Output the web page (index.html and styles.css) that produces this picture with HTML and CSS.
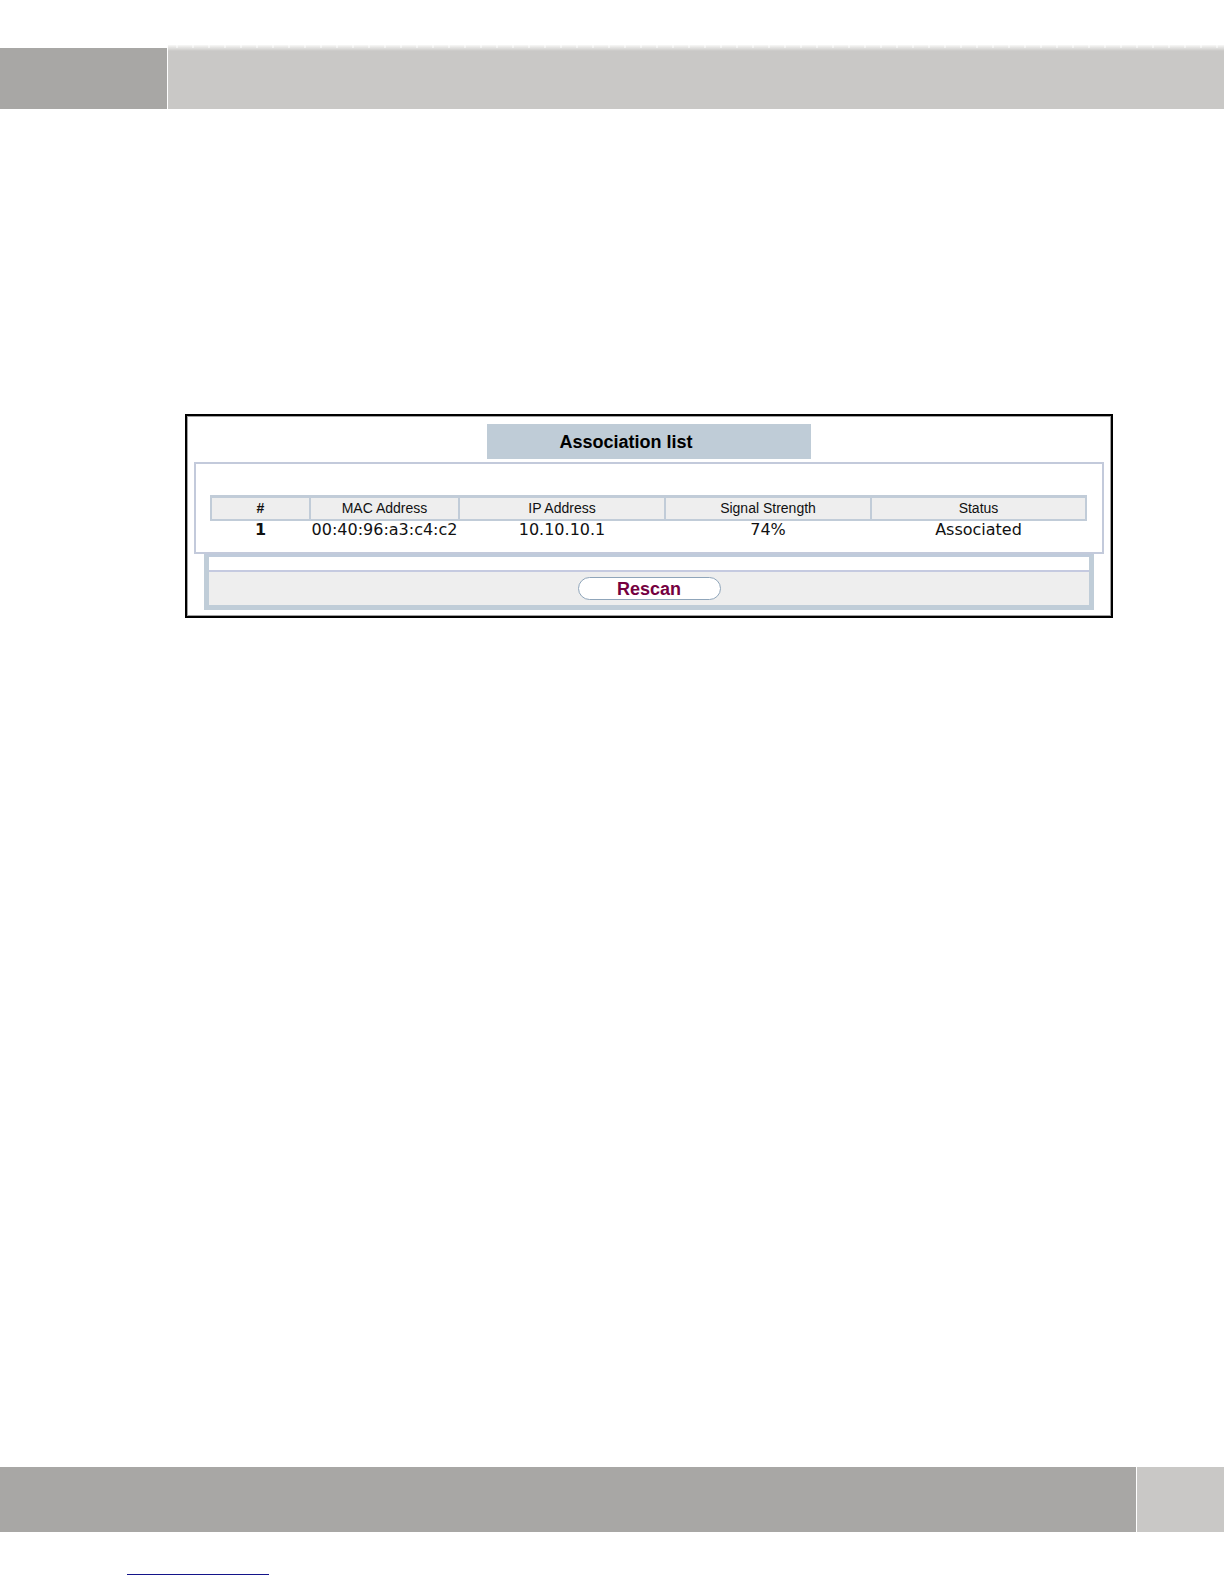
FILE: index.html
```html
<!DOCTYPE html>
<html lang="en">
<head>
<meta charset="utf-8">
<meta name="viewport" content="width=device-width, initial-scale=1">
<title>Association list</title>
<link rel="stylesheet" href="styles.css">
</head>
<body>
<header class="top-bar">
  <div class="top-dark"></div>
  <div class="top-light"></div>
</header>
<main class="content">
  <section class="frame">
    <h1 class="title">Association list</h1>
    <div class="panel">
      <table class="stations">
        <colgroup>
          <col class="col-num"><col class="col-mac"><col class="col-ip"><col class="col-signal"><col>
        </colgroup>
        <thead>
          <tr>
            <th class="num" scope="col">#</th>
            <th scope="col">MAC Address</th>
            <th scope="col">IP Address</th>
            <th scope="col">Signal Strength</th>
            <th scope="col">Status</th>
          </tr>
        </thead>
        <tbody>
          <tr>
            <td class="num">1</td>
            <td>00:40:96:a3:c4:c2</td>
            <td>10.10.10.1</td>
            <td>74%</td>
            <td>Associated</td>
          </tr>
        </tbody>
      </table>
    </div>
    <div class="actions">
      <div class="action-row">
        <button class="rescan" type="button">Rescan</button>
      </div>
    </div>
  </section>
</main>
<footer class="footer">
  <div class="bottom-bar">
    <div class="bottom-dark"></div>
    <div class="bottom-light"></div>
  </div>
  <div class="rule"></div>
</footer>
</body>
</html>
```
FILE: styles.css
```css
* {
  box-sizing: border-box;
}

body {
  margin: 0;
  min-height: 100vh;
  display: flex;
  flex-direction: column;
  background: #fff;
  color: #111;
  font-family: "Liberation Sans", Arial, sans-serif;
}

.top-bar {
  display: flex;
  align-items: flex-end;
  gap: 1px;
  padding-top: 45px;
}

.top-dark {
  width: 167px;
  height: 61px;
  background: #a8a7a5;
}

.top-light {
  flex: 1;
  height: 64px;
  background:
    repeating-linear-gradient(90deg, transparent 0 8px, rgba(255, 255, 255, 0.5) 8px 10px, transparent 10px 16px) 0 0 / 100% 3px no-repeat,
    linear-gradient(#f8f8f7, #c9c8c6 6px);
}

.content {
  flex: 1;
  padding: 305px 111px 40px 185px;
}

.frame {
  padding: 8px 7px 6px;
  border: 2px solid #000;
  box-shadow: inset 0 0 0 1px #a0a0a0;
}

.title {
  width: 324px;
  height: 35px;
  margin: 0 auto 3px;
  padding-right: 46px;
  background: #bfccd7;
  color: #000;
  font-size: 18px;
  line-height: 37px;
  text-align: center;
}

.panel {
  height: 92px;
  padding: 31px 15px 0 14px;
  border: 2px solid #c3cadb;
}

.stations {
  width: 100%;
  table-layout: fixed;
  border-collapse: collapse;
}

.col-num {
  width: 99px;
}

.col-mac {
  width: 149px;
}

.col-ip,
.col-signal {
  width: 206px;
}

.stations th {
  height: 23px;
  padding: 0;
  border: 2px solid #c1ccd8;
  border-top-width: 3px;
  background: #eee;
  font-size: 14px;
  font-weight: 400;
  line-height: 18px;
}

.stations td {
  padding: 0;
  font-family: "DejaVu Sans", Verdana, sans-serif;
  font-size: 16px;
  line-height: 18px;
  text-align: center;
  white-space: nowrap;
}

.stations .num {
  font-weight: 700;
}

.actions {
  margin: 0 10px;
  padding-top: 13px;
  border: 5px solid #c0cdd8;
  border-top: 3px solid #bfcbdb;
}

.action-row {
  display: flex;
  justify-content: center;
  padding: 5px 0;
  border-top: 2px solid #c5cae0;
  background: #eee;
}

.rescan {
  width: 143px;
  height: 23px;
  padding: 0;
  border: 1px solid #8fa5ba;
  border-radius: 12px;
  background: #fff;
  color: #75003f;
  font-family: inherit;
  font-size: 18px;
  font-weight: 700;
  line-height: 20px;
}

.bottom-bar {
  display: flex;
  gap: 1px;
  height: 65px;
}

.bottom-dark {
  flex: 1;
  background: #a8a7a5;
}

.bottom-light {
  width: 87px;
  background: #c9c8c6;
}

.rule {
  width: 142px;
  margin: 42px 0 9px 127px;
  border-top: 1px solid #14148a;
}
```
